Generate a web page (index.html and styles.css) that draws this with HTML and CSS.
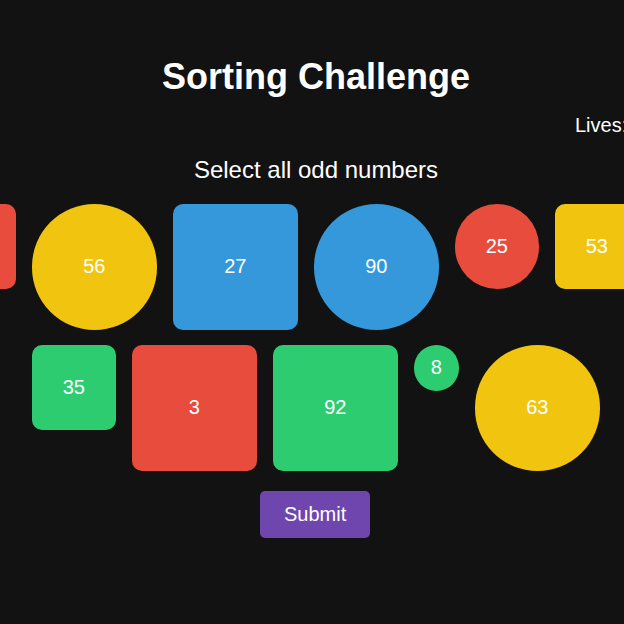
FILE: index.html
```html
<!DOCTYPE html>
<html lang="en">
<head>
<meta charset="utf-8">
<title>Sorting Challenge</title>
<link rel="stylesheet" href="styles.css">
</head>
<body>
<div class="page">
  <h1 class="title">Sorting Challenge</h1>
  <div class="status"><span class="lives">Lives: 3</span></div>
  <p class="prompt">Select all odd numbers</p>
  <div class="board">
    <div class="row row-1">
      <div class="item sq md red">41</div>
      <div class="item circle lg yellow">56</div>
      <div class="item sq lg blue">27</div>
      <div class="item circle lg blue">90</div>
      <div class="item circle md red">25</div>
      <div class="item sq md yellow">53</div>
    </div>
    <div class="row row-2">
      <div class="item sq md green">35</div>
      <div class="item sq lg red">3</div>
      <div class="item sq lg green">92</div>
      <div class="item circle sm green">8</div>
      <div class="item circle lg yellow">63</div>
    </div>
  </div>
  <div class="actions"><button class="submit">Submit</button></div>
</div>
</body>
</html>
```
FILE: styles.css
```css
html, body {
  margin: 0;
  padding: 0;
  background: #121212;
  color: #ffffff;
  font-family: "Liberation Sans", Arial, sans-serif;
  overflow: hidden;
}
.page {
  width: 624px;
  height: 624px;
  padding-left: 8px;
  padding-top: 56px;
  box-sizing: border-box;
  overflow: hidden;
}
.title {
  margin: 0;
  font-size: 36px;
  line-height: 42px;
  font-weight: bold;
  text-align: center;
}
.status {
  margin-top: 15px;
  height: 24px;
  font-size: 20px;
  line-height: 24px;
  white-space: nowrap;
  padding-left: 567px;
}
.prompt {
  margin: 19px 0 0;
  font-size: 24px;
  line-height: 28px;
  text-align: center;
}
.board {
  margin-top: 20px;
  margin-left: -8px;
  display: flex;
  flex-direction: column;
  gap: 15.5px;
}
.row {
  display: flex;
  gap: 15.5px;
  align-items: flex-start;
}
.row-1 { margin-left: -68.5px; }
.row-2 { margin-left: 31.5px; }
.item {
  flex-shrink: 0;
  display: flex;
  align-items: center;
  justify-content: center;
  font-size: 20px;
  color: #ffffff;
}
.sq { border-radius: 10px; }
.circle { border-radius: 50%; }
.sm { width: 45.5px; height: 45.5px; }
.md { width: 84.5px; height: 84.5px; }
.lg { width: 125.5px; height: 125.5px; }
.red { background: #e74c3c; }
.yellow { background: #f1c40f; }
.blue { background: #3498db; }
.green { background: #2ecc71; }
.actions {
  margin-top: 20.5px;
  padding-left: 0;
  display: flex;
  justify-content: center;
}
.submit {
  background: #6f45ae;
  color: #ffffff;
  border: none;
  border-radius: 5px;
  font-family: "Liberation Sans", Arial, sans-serif;
  font-size: 20px;
  line-height: 22.7px;
  padding: 12px 24px;
  width: 110px;
  margin-left: -2px;
}
```
